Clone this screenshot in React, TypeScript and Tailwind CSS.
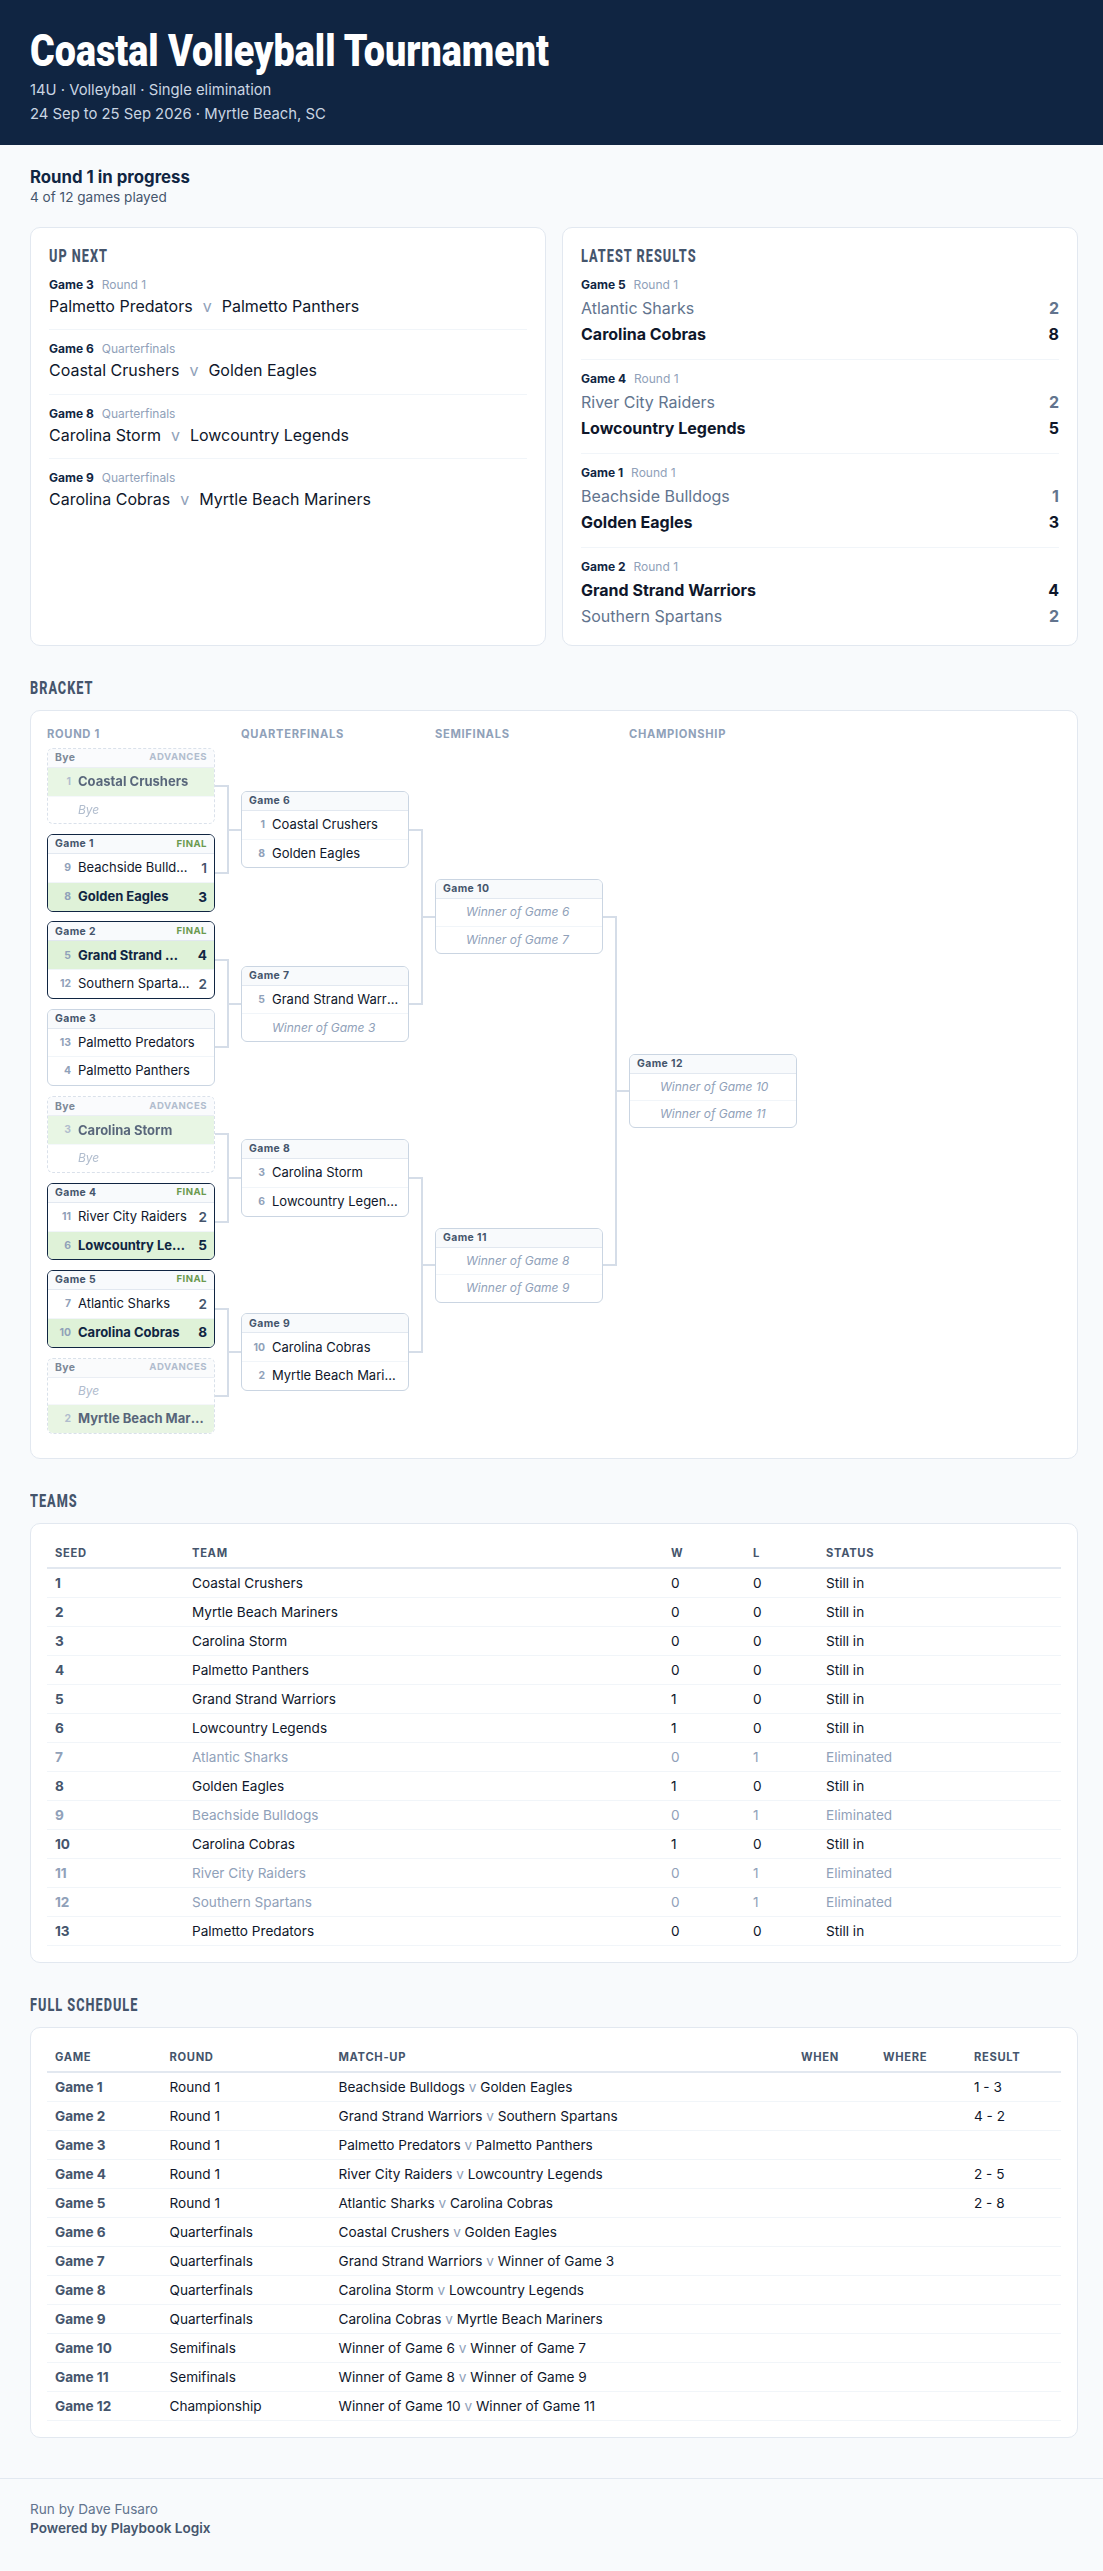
type Game = {
  id: string;
  round: string;
  home: string;
  away: string;
  result?: string;
};

type Slot = { seed?: number; name: string; score?: number; win?: boolean; tbd?: boolean };
type Match = { label: string; status?: 'FINAL' | 'ADVANCES'; slots: Slot[] };

const upNext: Game[] = [
  { id: 'Game 3', round: 'Round 1', home: 'Palmetto Predators', away: 'Palmetto Panthers' },
  { id: 'Game 6', round: 'Quarterfinals', home: 'Coastal Crushers', away: 'Golden Eagles' },
  { id: 'Game 8', round: 'Quarterfinals', home: 'Carolina Storm', away: 'Lowcountry Legends' },
  { id: 'Game 9', round: 'Quarterfinals', home: 'Carolina Cobras', away: 'Myrtle Beach Mariners' },
];

const results: { id: string; teams: [string, number][] }[] = [
  { id: 'Game 5', teams: [['Atlantic Sharks', 2], ['Carolina Cobras', 8]] },
  { id: 'Game 4', teams: [['River City Raiders', 2], ['Lowcountry Legends', 5]] },
  { id: 'Game 1', teams: [['Beachside Bulldogs', 1], ['Golden Eagles', 3]] },
  { id: 'Game 2', teams: [['Grand Strand Warriors', 4], ['Southern Spartans', 2]] },
];

const rounds: { title: string; matches: Match[] }[] = [
  {
    title: 'Round 1',
    matches: [
      { label: 'Bye', status: 'ADVANCES', slots: [{ seed: 1, name: 'Coastal Crushers', win: true }, { name: 'Bye', tbd: true }] },
      { label: 'Game 1', status: 'FINAL', slots: [{ seed: 9, name: 'Beachside Bulldogs', score: 1 }, { seed: 8, name: 'Golden Eagles', score: 3, win: true }] },
      { label: 'Game 2', status: 'FINAL', slots: [{ seed: 5, name: 'Grand Strand Warriors', score: 4, win: true }, { seed: 12, name: 'Southern Spartans', score: 2 }] },
      { label: 'Game 3', slots: [{ seed: 13, name: 'Palmetto Predators' }, { seed: 4, name: 'Palmetto Panthers' }] },
      { label: 'Bye', status: 'ADVANCES', slots: [{ seed: 3, name: 'Carolina Storm', win: true }, { name: 'Bye', tbd: true }] },
      { label: 'Game 4', status: 'FINAL', slots: [{ seed: 11, name: 'River City Raiders', score: 2 }, { seed: 6, name: 'Lowcountry Legends', score: 5, win: true }] },
      { label: 'Game 5', status: 'FINAL', slots: [{ seed: 7, name: 'Atlantic Sharks', score: 2 }, { seed: 10, name: 'Carolina Cobras', score: 8, win: true }] },
      { label: 'Bye', status: 'ADVANCES', slots: [{ name: 'Bye', tbd: true }, { seed: 2, name: 'Myrtle Beach Mariners', win: true }] },
    ],
  },
  {
    title: 'Quarterfinals',
    matches: [
      { label: 'Game 6', slots: [{ seed: 1, name: 'Coastal Crushers' }, { seed: 8, name: 'Golden Eagles' }] },
      { label: 'Game 7', slots: [{ seed: 5, name: 'Grand Strand Warriors' }, { name: 'Winner of Game 3', tbd: true }] },
      { label: 'Game 8', slots: [{ seed: 3, name: 'Carolina Storm' }, { seed: 6, name: 'Lowcountry Legends' }] },
      { label: 'Game 9', slots: [{ seed: 10, name: 'Carolina Cobras' }, { seed: 2, name: 'Myrtle Beach Mariners' }] },
    ],
  },
  {
    title: 'Semifinals',
    matches: [
      { label: 'Game 10', slots: [{ name: 'Winner of Game 6', tbd: true }, { name: 'Winner of Game 7', tbd: true }] },
      { label: 'Game 11', slots: [{ name: 'Winner of Game 8', tbd: true }, { name: 'Winner of Game 9', tbd: true }] },
    ],
  },
  {
    title: 'Championship',
    matches: [
      { label: 'Game 12', slots: [{ name: 'Winner of Game 10', tbd: true }, { name: 'Winner of Game 11', tbd: true }] },
    ],
  },
];

const teams: [string, number, number][] = [
  ['Coastal Crushers', 0, 0],
  ['Myrtle Beach Mariners', 0, 0],
  ['Carolina Storm', 0, 0],
  ['Palmetto Panthers', 0, 0],
  ['Grand Strand Warriors', 1, 0],
  ['Lowcountry Legends', 1, 0],
  ['Atlantic Sharks', 0, 1],
  ['Golden Eagles', 1, 0],
  ['Beachside Bulldogs', 0, 1],
  ['Carolina Cobras', 1, 0],
  ['River City Raiders', 0, 1],
  ['Southern Spartans', 0, 1],
  ['Palmetto Predators', 0, 0],
];

const schedule: Game[] = [
  { id: 'Game 1', round: 'Round 1', home: 'Beachside Bulldogs', away: 'Golden Eagles', result: '1 - 3' },
  { id: 'Game 2', round: 'Round 1', home: 'Grand Strand Warriors', away: 'Southern Spartans', result: '4 - 2' },
  { id: 'Game 3', round: 'Round 1', home: 'Palmetto Predators', away: 'Palmetto Panthers' },
  { id: 'Game 4', round: 'Round 1', home: 'River City Raiders', away: 'Lowcountry Legends', result: '2 - 5' },
  { id: 'Game 5', round: 'Round 1', home: 'Atlantic Sharks', away: 'Carolina Cobras', result: '2 - 8' },
  { id: 'Game 6', round: 'Quarterfinals', home: 'Coastal Crushers', away: 'Golden Eagles' },
  { id: 'Game 7', round: 'Quarterfinals', home: 'Grand Strand Warriors', away: 'Winner of Game 3' },
  { id: 'Game 8', round: 'Quarterfinals', home: 'Carolina Storm', away: 'Lowcountry Legends' },
  { id: 'Game 9', round: 'Quarterfinals', home: 'Carolina Cobras', away: 'Myrtle Beach Mariners' },
  { id: 'Game 10', round: 'Semifinals', home: 'Winner of Game 6', away: 'Winner of Game 7' },
  { id: 'Game 11', round: 'Semifinals', home: 'Winner of Game 8', away: 'Winner of Game 9' },
  { id: 'Game 12', round: 'Championship', home: 'Winner of Game 10', away: 'Winner of Game 11' },
];

const Heading = ({ children }: { children: string }) => (
  <h2 className="h-[22px] origin-left scale-x-[0.69] whitespace-nowrap font-['Roboto'] text-[18.4px] leading-[22px] font-extrabold tracking-[0.08em] text-slate-600 uppercase">
    {children}
  </h2>
);

const Meta = ({ id, round }: { id: string; round: string }) => (
  <div className="flex gap-2 text-xs leading-[18px]">
    <span className="font-bold text-[#102542]">{id}</span>
    <span className="text-slate-400">{round}</span>
  </div>
);

const MatchBox = ({ match }: { match: Match }) => {
  const border =
    match.status === 'FINAL'
      ? 'border-[#102542]'
      : match.status === 'ADVANCES'
        ? 'border-dashed border-slate-300 opacity-70'
        : 'border-slate-300';
  return (
    <div className={`w-[168px] overflow-hidden rounded-md border bg-white ${border}`}>
      <div className="flex h-[19px] items-center justify-between border-b border-slate-200 bg-slate-50 px-[7px] font-bold">
        <span className="text-[10.4px] tracking-[0.04em] text-slate-600">{match.label}</span>
        {match.status && (
          <span
            className={`pb-px text-[9.6px] tracking-[0.05em] ${match.status === 'FINAL' ? 'text-[#6a994e]' : 'text-slate-400'}`}
          >
            {match.status}
          </span>
        )}
      </div>
      {match.slots.map((slot, i) => (
        <div
          key={i}
          className={`flex items-center gap-[7px] px-[7px] ${i === 0 ? 'border-b border-slate-100' : ''} ${
            slot.win ? 'bg-[#dff2d8]' : ''
          } ${
            slot.tbd ? (i === 0 ? 'h-[27.4px]' : 'h-[26.4px]') : i === 0 ? 'h-[28.8px]' : 'h-[27.8px]'
          }`}
        >
          <span className="w-4 shrink-0 text-right text-[10.4px] font-bold text-slate-400">{slot.seed}</span>
          <span
            className={`min-w-0 flex-1 truncate ${
              slot.tbd
                ? 'text-[12px] text-slate-400 italic'
                : slot.win
                  ? 'text-[13px] font-bold text-[#102542]'
                  : 'text-[13px] text-slate-900'
            }`}
          >
            {slot.name}
          </span>
          {slot.score !== undefined && (
            <span className={`text-[13.6px] ${slot.win ? 'font-bold text-[#102542]' : 'font-semibold text-slate-600'}`}>
              {slot.score}
            </span>
          )}
        </div>
      ))}
    </div>
  );
};

// Elbow lines that join each pair of matches to the next round
const Connectors = ({ count }: { count: number }) => (
  <div className="flex w-[26px] flex-col">
    {Array.from({ length: count }, (_, i) => (
      <div key={i} className="flex flex-1 items-center">
        <div className="h-[calc(50%+2px)] w-[14px] border-y-2 border-r-2 border-[#d5dde8]" />
        <div className="h-0.5 flex-1 bg-[#d5dde8]" />
      </div>
    ))}
  </div>
);

const Th = ({ children, className }: { children: string; className: string }) => (
  <th
    className={`h-[29px] border-b-2 border-slate-200 px-2 text-left text-[11.2px] font-bold tracking-[0.06em] text-slate-600 uppercase ${className}`}
  >
    {children}
  </th>
);

const td = 'h-[29px] border-b border-slate-100 px-2 py-0 leading-5';

export default function App() {
  return (
    <div className="min-h-[2571px] bg-slate-50 font-['Inter',sans-serif] text-slate-900">
      <header className="h-[145px] bg-[#102542] pt-[25px] pl-[30px]">
        <h1 className="h-[53px] origin-left scale-x-[0.856] whitespace-nowrap font-['Roboto'] text-[44px] leading-[53px] font-black text-white">
          Coastal Volleyball Tournament
        </h1>
        <p className="text-[14.8px] leading-6 text-slate-300">14U · Volleyball · Single elimination</p>
        <p className="text-[14.8px] leading-6 text-slate-300">24 Sep to 25 Sep 2026 · Myrtle Beach, SC</p>
      </header>

      <main className="w-[1078px] pt-[21px] pl-[30px]">
        <p className="text-[16.8px] leading-[22px] font-bold text-[#102542]">Round 1 in progress</p>
        <p className="text-[13.6px] leading-[18px] text-slate-600">4 of 12 games played</p>

        <div className="mt-[21px] grid h-[419px] grid-cols-2 gap-4">
          <section className="rounded-[10px] border border-slate-200 bg-white px-[18px] pt-[17px]">
            <Heading>Up next</Heading>
            <div className="-mt-[1.5px] divide-y divide-slate-100">
              {upNext.map((game) => (
                <div key={game.id} className="h-[64.5px] pt-[10px]">
                  <Meta id={game.id} round={game.round} />
                  <p className="flex gap-[10px] text-base leading-[25.4px]">
                    <span>{game.home}</span>
                    <span className="text-slate-400">v</span>
                    <span>{game.away}</span>
                  </p>
                </div>
              ))}
            </div>
          </section>

          <section className="rounded-[10px] border border-slate-200 bg-white px-[18px] pt-[17px]">
            <Heading>Latest results</Heading>
            <div className="-mt-[1.5px] divide-y divide-slate-100">
              {results.map((game) => {
                const best = Math.max(game.teams[0][1], game.teams[1][1]);
                return (
                  <div key={game.id} className="h-[94px] pt-[10px]">
                    <Meta id={game.id} round="Round 1" />
                    <div className="pt-px">
                      {game.teams.map(([name, score]) => (
                        <div
                          key={name}
                          className={`flex justify-between text-base leading-[26px] ${
                            score === best ? 'font-bold text-slate-900' : 'text-slate-500'
                          }`}
                        >
                          <span>{name}</span>
                          <span className="font-bold">{score}</span>
                        </div>
                      ))}
                    </div>
                  </div>
                );
              })}
            </div>
          </section>
        </div>

        <section className="pt-[31px]">
          <Heading>Bracket</Heading>
          <div className="mt-[11px] h-[749px] rounded-[10px] border border-slate-200 bg-white px-4 pt-4">
            <div className="flex gap-[26px]">
              {rounds.map((round) => (
                <h3
                  key={round.title}
                  className="w-[168px] text-[11.2px] leading-[15.4px] font-bold tracking-[0.06em] text-slate-400 uppercase"
                >
                  {round.title}
                </h3>
              ))}
            </div>
            <div className="flex h-[697px]">
              {rounds.map((round, i) => (
                <div key={round.title} className="flex">
                  <div className="flex flex-col">
                    {round.matches.map((match, j) => (
                      <div key={j} className="flex flex-1 items-center">
                        <MatchBox match={match} />
                      </div>
                    ))}
                  </div>
                  {i < rounds.length - 1 && <Connectors count={rounds[i + 1].matches.length} />}
                </div>
              ))}
            </div>
          </div>
        </section>

        <section className="pt-[31px]">
          <Heading>Teams</Heading>
          <div className="mt-[11px] h-[440px] rounded-[10px] border border-slate-200 bg-white p-4">
            <table className="w-full table-fixed border-separate border-spacing-0 text-[13.6px]">
              <thead>
                <tr>
                  <Th className="w-[137px]">Seed</Th>
                  <Th className="w-[479px]">Team</Th>
                  <Th className="w-[82px]">W</Th>
                  <Th className="w-[73px]">L</Th>
                  <Th className="w-[243px]">Status</Th>
                </tr>
              </thead>
              <tbody>
                {teams.map(([name, won, lost], i) => (
                  <tr key={name} className={lost ? 'text-slate-400' : ''}>
                    <td className={`${td} font-bold ${lost ? '' : 'text-slate-600'}`}>{i + 1}</td>
                    <td className={td}>{name}</td>
                    <td className={td}>{won}</td>
                    <td className={td}>{lost}</td>
                    <td className={td}>{lost ? 'Eliminated' : 'Still in'}</td>
                  </tr>
                ))}
              </tbody>
            </table>
          </div>
        </section>

        <section className="pt-[31px]">
          <Heading>Full schedule</Heading>
          <div className="mt-[11px] h-[411px] rounded-[10px] border border-slate-200 bg-white p-4">
            <table className="w-full table-fixed border-separate border-spacing-0 text-[13.6px]">
              <thead>
                <tr>
                  <Th className="w-[114.5px]">Game</Th>
                  <Th className="w-[169px]">Round</Th>
                  <Th className="w-[462.5px]">Match-up</Th>
                  <Th className="w-[82px]">When</Th>
                  <Th className="w-[91px]">Where</Th>
                  <Th className="w-[95px]">Result</Th>
                </tr>
              </thead>
              <tbody>
                {schedule.map((game) => (
                  <tr key={game.id}>
                    <td className={`${td} font-bold text-slate-600`}>{game.id}</td>
                    <td className={td}>{game.round}</td>
                    <td className={td}>
                      {game.home} <span className="text-slate-400">v</span> {game.away}
                    </td>
                    <td className={td} />
                    <td className={td} />
                    <td className={td}>{game.result}</td>
                  </tr>
                ))}
              </tbody>
            </table>
          </div>
        </section>
      </main>

      <footer className="mt-10 border-t border-slate-200 pt-[20.5px] pl-[30px] text-[13.6px] leading-[19.6px]">
        <p className="text-slate-500">Run by Dave Fusaro</p>
        <p className="font-semibold text-slate-600">Powered by Playbook Logix</p>
      </footer>
    </div>
  );
}
